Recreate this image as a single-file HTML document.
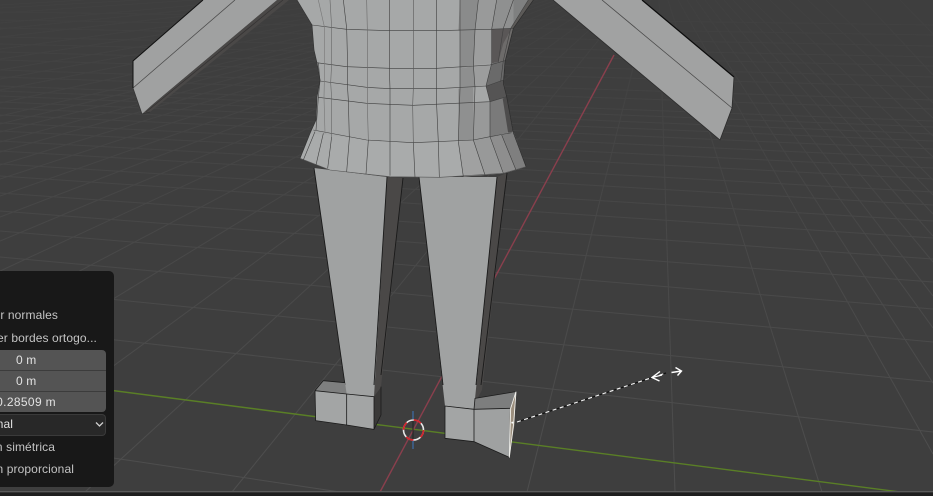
<!DOCTYPE html>
<html lang="es">
<head>
<meta charset="utf-8">
<title>Blender viewport</title>
<style>
html,body{margin:0;padding:0;width:933px;height:496px;overflow:hidden;background:#3e3e3e;font-family:"Liberation Sans",sans-serif}
#w{position:absolute;left:0;top:0;width:933px;height:496px;overflow:hidden;filter:blur(.3px)}
#v{position:absolute;left:0;top:0}
#p{position:absolute;left:0;top:271px;width:114px;height:216px;background:#181818;border-radius:0 5px 5px 0;overflow:hidden}
.t{position:absolute;font-size:12px;line-height:14px;color:#c4c4c4;white-space:nowrap;letter-spacing:.1px}
#f{position:absolute;left:0;top:79px;width:106px;height:62px;background:#545454;border-radius:0 4px 4px 0}
.s{position:absolute;left:0;width:106px;height:1px;background:#3c3c3c}
#d{position:absolute;left:0;top:143px;width:105px;height:20px;background:#282828;border:1px solid #3a3a3a;border-left:0;border-radius:0 4px 4px 0}
</style>
</head>
<body>
<div id="w">
<svg id="v" width="933" height="496" viewBox="0 0 933 496" xmlns="http://www.w3.org/2000/svg">
<defs>
<linearGradient id="g" gradientUnits="userSpaceOnUse" x1="0" y1="0" x2="0" y2="492">
<stop offset="0" stop-color="#404040"/><stop offset=".25" stop-color="#444444"/><stop offset=".55" stop-color="#494949"/><stop offset="1" stop-color="#4e4e4e"/>
</linearGradient>
</defs>
<rect width="933" height="496" fill="#3e3e3e"/>
<path fill="none" stroke="url(#g)" stroke-width="1" d="M0 441L340 492M0 327L933 432M0 288L933 382M0 257L933 342M0 231L933 309M0 211L933 282M0 193L933 259M0 176L933 238M0 164L933 221M0 151L933 205M0 141L933 192M0 131L933 179M0 123L933 168M0 115L933 158M0 108L933 149M0 102L933 141M0 96L933 134M0 91L933 127M0 86L933 121M0 77L933 109M0 70L933 100M0 60L933 87M0 52L933 77M0 44L933 66M0 37L933 57M0 28L933 46M0 20L933 35M0 12L933 25"/>
<path fill="none" stroke="url(#g)" stroke-width="1" d="M631 0L232 492M622 0L85 492M613 0L0 449M603 0L0 368M594 0L0 313M585 0L0 271M576 0L0 241M566 0L0 217M557 0L0 196M548 0L0 179M538 0L0 165M529 0L0 152M520 0L0 142M511 0L0 132M501 0L0 124M492 0L0 116M474 0L0 103M455 0L0 90M436 0L0 79M418 0L0 70M390 0L0 59M362 0L0 49M325 0L0 37M288 0L0 29M251 0L0 23M195 0L0 13M139 0L0 8M84 0L0 5M650 0L527 492M659 0L675 492M668 0L822 492M678 0L933 454M687 0L933 383M696 0L933 328M705 0L933 296M715 0L933 262M724 0L933 236M733 0L933 214M743 0L933 195M752 0L933 180M770 0L933 157M789 0L933 136M808 0L933 118M826 0L933 103M863 0L933 75M900 0L933 34"/>
<path d="M0 376L900 492" stroke="#5a7f26" stroke-width="1.4" fill="none"/>
<path d="M380 492L614 55" stroke="#8a3f4d" stroke-width="1.4" fill="none"/>

<!-- left arm -->
<polygon points="142,114 277,0 289,0 150,112" fill="#4a4847"/>
<path d="M146 112L283 0" stroke="#363434" stroke-width=".8" fill="none"/>
<polygon points="133,61 203,0 277,0 152,105 142,114 133,88" fill="#a0a1a1"/>
<path d="M133 88L235 0" stroke="#4a4a4a" stroke-width=".8" fill="none"/>
<path d="M203 0L133 61V88" stroke="#111" stroke-width="1" fill="none"/>
<path d="M133 88L142 114L150 112" stroke="#333" stroke-width=".7" fill="none"/>

<!-- right arm -->
<polygon points="553,0 642,0 734,77 732,108 720,140" fill="#a1a2a2"/>
<path d="M602 0L732 108" stroke="#4a4a4a" stroke-width=".8" fill="none"/>
<path d="M642 0L734 77" stroke="#0c0c0c" stroke-width="1.2" fill="none"/>
<path d="M734 77L732 108L720 140L553 0" stroke="#2c2c2c" stroke-width=".8" fill="none"/>

<!-- left leg -->
<polygon points="387,177 403,178 381,387 374,397" fill="#4a4847"/>
<polygon points="314,168 387,177 374,397 346,394" fill="#a0a2a2"/>
<path d="M314 168L345 385M387 177L374 385M403 178L381 375" stroke="#191919" stroke-width=".9" fill="none"/>

<!-- right leg -->
<polygon points="497,177 507,173 482,390 474,405" fill="#4a4847"/>
<polygon points="419,177 497,177 474,409 445,406" fill="#a0a2a2"/>
<path d="M419 177L443 385M497 177L476 385M507 173L481 385" stroke="#191919" stroke-width=".9" fill="none"/>

<!-- feet -->
<g transform="translate(300,370) scale(.33333)" stroke-linejoin="round">
<polygon points="45,62 70,32 135,38 140,72" fill="#7e7f7f"/>
<polygon points="45,62 140,72 140,165 47,152" fill="#a3a5a5"/>
<polygon points="140,72 222,80 222,178 140,165" fill="#a3a5a5"/>
<polygon points="222,80 243,52 243,135 222,178" fill="#3a3938"/>
<path d="M45 62L70 32L135 38M45 62L140 72L222 80L222 178L140 165L47 152L45 62M140 72V165M222 178L243 135V50" stroke="#1b1b1b" stroke-width="2.4" fill="none"/>
<polygon points="435,108 522,118 522,215 435,205" fill="#a3a5a5"/>
<polygon points="522,118 525,85 648,65 630,115" fill="#7d7e7e"/>
<polygon points="522,118 630,115 628,262 522,215" fill="#9fa1a1"/>
<polygon points="630,115 648,65 643,165 628,262" fill="#9c8f7e"/>
<path d="M435 108L522 118L522 215L435 205ZM522 118L525 85L648 65M522 118L630 115M522 215L628 262" stroke="#1b1b1b" stroke-width="2.4" fill="none"/>
<path d="M648 65L641 160L628 262L632 115L648 65" stroke="#f2f2ee" stroke-width="2.6" fill="none"/>
<circle cx="637" cy="158" r="3" fill="#fff"/>
</g>

<!-- torso -->
<g transform="translate(290,0) scale(.33333)">
<polygon points="21,0 66,75 72,150 81,189 90,240 81,291 78,360 60,400 30,475 120,510 300,530 450,532 640,520 708,500 670,395 650,290 640,250 645,185 670,85 730,0" fill="#a6a8a8"/>
<polygon points="510,0 565,0 555,90 505,92" fill="#8a8b8b"/>
<polygon points="565,0 620,0 605,88 555,90" fill="#999a9a"/>
<polygon points="620,0 670,0 670,85 605,88" fill="#8f9090"/>
<polygon points="670,0 715,0 670,85" fill="#7f8080"/>
<polygon points="715,0 730,0 670,85 662,85" fill="#5c5a58"/>
<polygon points="510,92 555,90 552,195 510,205" fill="#8b8c8c"/>
<polygon points="555,90 605,88 605,190 552,195" fill="#9d9e9e"/>
<polygon points="605,88 670,85 645,182 605,190" fill="#5a5757"/>
<polygon points="625,185 640,130 665,85 670,85 645,182" fill="#6d6b6a"/>
<polygon points="510,205 552,198 555,262 510,266" fill="#8e8f8f"/>
<polygon points="552,198 605,190 588,258 555,262" fill="#9c9d9d"/>
<polygon points="605,190 645,182 640,240 588,258" fill="#6a6a6a"/>
<polygon points="588,258 640,240 650,290 600,305" fill="#555454"/>
<polygon points="505,266 550,262 550,310 505,316" fill="#8e8f8f"/>
<polygon points="505,312 550,310 550,420 505,425" fill="#8f9090"/>
<polygon points="550,310 600,305 600,410 550,420" fill="#989999"/>
<polygon points="600,305 650,290 670,398 600,410" fill="#7a7a7a"/>
<polygon points="638,296 650,290 670,398 655,402" fill="#4d4c4c"/>
<polygon points="60,400 300,425 450,428 550,420 670,395 708,500 640,520 450,532 300,530 120,510 30,475" fill="#a9abab"/>
<polygon points="505,425 550,420 585,525 520,530" fill="#a0a1a1"/>
<polygon points="550,420 600,410 640,520 585,525" fill="#989999"/>
<polygon points="600,410 635,405 678,510 640,520" fill="#8e8e8e"/>
<polygon points="635,405 670,395 708,500 678,510" fill="#7f7f7f"/>
<g fill="none" stroke="#3f3f3f" stroke-width="1.8">
<path d="M66 75L170 88L300 92L440 92L600 88L670 85"/>
<path d="M80 188L170 200L300 205L440 205L600 195L645 182"/>
<path d="M90 243L230 262L300 266L440 266L590 258L640 240"/>
<path d="M85 292L230 310L370 316L600 305L650 290"/>
<path d="M70 390L230 420L370 428L550 420L600 410L665 398"/>
<path d="M30 475L120 510L300 530L450 532L640 520L708 500" stroke="#555"/>
<path d="M85 188L90 243L85 292L78 390"/>
<path d="M85 0L103 80L103 188L103 243L102 292L105 400" stroke="#777"/>
<path d="M120 0L125 82L125 190L122 248L125 296L125 410" stroke="#666"/>
<path d="M160 0L170 85L173 200L172 252L175 300L178 415"/>
<path d="M230 0L232 90L233 203L232 262L232 310L235 420" stroke="#6a6a6a"/>
<path d="M298 0V92V205L300 266V312L300 425"/>
<path d="M370 0V205V266L368 316L370 428" stroke="#5a5a5a"/>
<path d="M440 0V205V266V316L445 428"/>
<path d="M510 0V205V266L505 425"/>
<path d="M565 0L555 90L550 195L555 262L550 420"/>
<path d="M620 0L605 88L605 190L588 258L600 305L600 410"/>
<path d="M670 0L640 85L625 185"/>
<path d="M715 0L662 85L640 182L632 245"/>
<path d="M75 395L40 480M100 400L78 495M125 410L113 505M178 415L170 515M235 420L228 522M300 425V527M370 428L375 532M445 428L448 532M505 425L520 530M550 420L585 525M600 410L640 520M635 405L678 510"/>
</g>
<path d="M730 0L670 85L645 185L640 250L650 290L670 398L708 500" stroke="#2a2a2a" stroke-width="2" fill="none"/>
<path d="M21 0L66 75L72 150L81 189L90 240L81 291L78 360L60 400L30 475" stroke="#333" stroke-width="2" fill="none"/>
</g>

<!-- 3D cursor -->
<g fill="none">
<path d="M413 411V419M413 440V449" stroke="#3d6ea8" stroke-width="1.2"/>
<path d="M413 419V440" stroke="#222" stroke-width="1"/>
<circle cx="413.5" cy="430" r="10" stroke="#e8e8e8" stroke-width="1.6"/>
<circle cx="413.5" cy="430" r="10" stroke="#d0242c" stroke-width="1.7" stroke-dasharray="8 7.7"/>
</g>

<!-- dashed transform line -->
<path d="M517 422L666 373" stroke="#111" stroke-width="1.2" fill="none" stroke-dasharray="3.5 4" stroke-dashoffset="3.7"/>
<path d="M517 422L666 373" stroke="#f4f4f4" stroke-width="1.1" stroke-dasharray="4 3.5" fill="none"/>
<path d="M660 371.5L652 377.5L659.5 381M652 377.5L662 375" stroke="#fff" stroke-width="1.4" fill="none"/>
<path d="M675.5 367.5L681.5 371L677.5 375.5M671.5 372.5L681.5 371" stroke="#fff" stroke-width="1.4" fill="none"/>

<rect x="0" y="491" width="933" height="1.4" fill="#5a5a5a"/>
<rect x="0" y="492.4" width="933" height="3.6" fill="#1e1e1e"/>
</svg>

<div id="p">
<div class="t" style="right:56px;top:37px">Invertir normales</div>
<div class="t" style="right:17px;top:60px">Mantener bordes ortogo...</div>
<div id="f"></div>
<div class="s" style="top:99px"></div>
<div class="s" style="top:120px"></div>
<div class="t" style="left:16px;top:82px;color:#e2e2e2">0 m</div>
<div class="t" style="left:16px;top:103px;color:#e2e2e2">0 m</div>
<div class="t" style="right:58px;top:124px;color:#e2e2e2;letter-spacing:.35px">-0.28509 m</div>
<div id="d"></div>
<div class="t" style="right:101px;top:146px;color:#e2e2e2">Normal</div>
<svg style="position:absolute;left:95px;top:150px" width="9" height="7" viewBox="0 0 9 7"><path d="M1 1.5L4.5 5L8 1.5" fill="none" stroke="#d0d0d0" stroke-width="1.3"/></svg>
<div class="t" style="right:59px;top:169px">Deformación simétrica</div>
<div class="t" style="right:40px;top:191px">Edición proporcional</div>
</div>
</div>
</body>
</html>
